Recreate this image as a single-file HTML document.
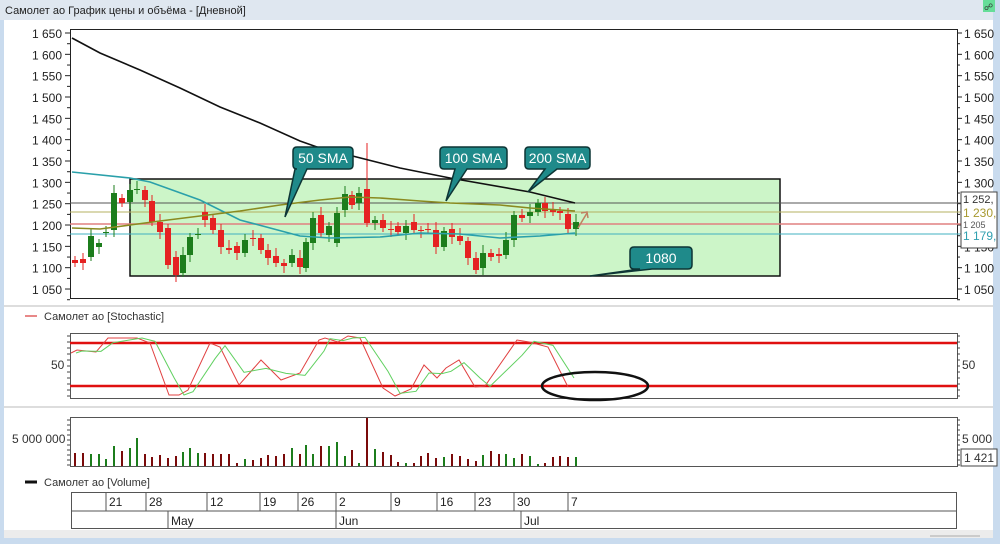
<!DOCTYPE html>
<html><head><meta charset="utf-8"><style>
html,body{margin:0;padding:0;width:1000px;height:544px;overflow:hidden;background:#c9dbee}
svg{display:block}
text{font-family:"Liberation Sans","DejaVu Sans",sans-serif}
</style></head><body>
<svg id="s" width="1000" height="544" xmlns="http://www.w3.org/2000/svg">
<rect width="1000" height="544" fill="#c9dbee"/>
<rect x="0" y="0" width="993" height="20" fill="#dfe7f0"/>
<text x="5" y="14" font-size="11" fill="#222">Самолет ао График цены и объёма - [Дневной]</text>
<rect x="962" y="2" width="31" height="17" fill="#dfe7f0"/>
<rect x="983" y="0" width="12" height="12" fill="#66dd99"/>
<text x="984" y="10" font-size="9" fill="#333">&#x260D;</text>
<rect x="4" y="20" width="989" height="512" fill="#fff"/>
<rect x="4" y="530" width="989" height="8" fill="#ececec"/>
<line x1="930" y1="536" x2="980" y2="536" stroke="#aaa" stroke-width="1"/>
<line x1="4" y1="306" x2="993" y2="306" stroke="#bbb"/>
<line x1="4" y1="407" x2="993" y2="407" stroke="#bbb"/>
<g id="g"></g>
</svg>
<script>
const g=document.getElementById('g');let h='';
const Y=p=>33+(1650-p)*0.4267;
h+='<rect x="70.5" y="29.5" width="887" height="269" fill="none" stroke="#222"/>';
h+='<rect x="130" y="179" width="650" height="97" fill="#ccf5c8" stroke="#111" stroke-width="1.5"/>';
for(let p=1650;p>=1050;p-=50){const y=Y(p);const t=(p/1000|0)+' '+String(p%1000).padStart(3,'0');
h+=`<line x1="65" y1="${y}" x2="70" y2="${y}" stroke="#222"/><text x="62" y="${y+5}" font-size="12" text-anchor="end" fill="#222">${t}</text>`;
h+=`<line x1="957" y1="${y}" x2="962" y2="${y}" stroke="#222"/><text x="964" y="${y+5}" font-size="12" fill="#222">${t}</text>`;
h+=`<line x1="67" y1="${y+10.7}" x2="70" y2="${y+10.7}" stroke="#222"/><line x1="957" y1="${y+10.7}" x2="960" y2="${y+10.7}" stroke="#222"/>`;}
h+='<line x1="70" y1="203" x2="993" y2="203" stroke="#555"/><line x1="70" y1="212" x2="993" y2="212" stroke="#b5b060"/><line x1="70" y1="224" x2="993" y2="224" stroke="#e08080" stroke-width="1.5"/><line x1="70" y1="234" x2="993" y2="234" stroke="#40b0c0"/>';
h+='<rect x="961" y="192" width="36" height="56" fill="#fff" stroke="#444"/><text x="963" y="203" font-size="11" fill="#333">1 252,</text><text x="963" y="217" font-size="12" fill="#a89a30">1 230,</text><text x="963" y="228" font-size="9" fill="#555">1 205</text><text x="963" y="240" font-size="12" fill="#30a0b0">1 179,</text>';
const C=[[75,260,263],[83,259,263],[91,257,236],[99,247,243],[106,233,232],[114,230,193],[122,198,203],[130,202,190],[137,190,189],[145,190,200],[152,201,222],[160,222,232],[168,228,265],[176,257,275],[183,273,255],[190,255,237],[198,235,234],[205,212,220],[213,218,230],[221,230,247],[229,248,250],[237,246,253],[245,253,240],[253,238,239],[261,238,250],[268,250,258],[276,256,263],[284,263,266],[292,263,255],[300,258,267],[306,268,242],[313,243,218],[321,215,233],[329,235,226],[337,243,213],[345,210,194],[352,195,205],[359,203,193],[367,189,223],[375,223,220],[383,220,228],[391,229,230],[398,226,232],[406,233,226],[414,222,230],[421,230,231],[428,229,230],[436,230,247],[444,247,231],[452,229,237],[460,236,241],[468,241,258],[476,258,270],[483,268,253],[491,253,257],[499,254,256],[506,255,240],[514,240,215],[522,215,218],[530,216,212],[538,212,203],[545,203,211],[553,210,212],[560,211,213],[568,214,229],[576,229,222]];
let vol=[13,13,12,12,7,20,15,18,28,12,9,11,8,10,14,18,13,13,12,12,12,3,7,6,8,11,10,12,18,12,21,12,20,20,24,10,16,3,4,17,14,11,4,3,3,10,13,8,9,12,10,7,5,11,15,12,12,8,12,10,2,3,9,10,9,9];
C.forEach((c,i)=>{const [x,o,cl]=c;const up=cl<o;const col=up?'#1c7d1c':'#e52222';const t=Math.min(o,cl),b=Math.max(o,cl);
const wt=i==38?143:t-4-(i%3)*2,wb=b+4+(i%2)*3;
h+=`<line x1="${x}" y1="${wt}" x2="${x}" y2="${wb}" stroke="${col}"/><rect x="${x-3}" y="${t}" width="6" height="${Math.max(1,b-t)}" fill="${col}"/>`;
const v=vol[i]||8;const vh=i==38?48:v;
h+=`<rect x="${x-1}" y="${466-vh}" width="2" height="${vh}" fill="${up?'#1c7d1c':'#7a0a0a'}"/>`;});
const pl=(pts,col,w)=>`<polyline points="${pts}" fill="none" stroke="${col}" stroke-width="${w}"/>`;
h+=pl('72,38 100,53 140,70 180,88 220,107 260,123 300,141 317,147 400,168 450,178 530,192 575,203','#111',1.6);
h+=pl('72,172 130,178 150,182 200,200 240,220 300,236 330,238 380,237 420,233 460,234 500,238 540,236 575,233','#2aa0aa',1.6);
h+=pl('72,228 100,229 130,225 160,221 200,216 240,211 280,205 320,200 350,197 380,198 420,201 450,203 500,205 530,208 575,211','#8a8a20',1.6);
h+='<line x1="578" y1="228" x2="587" y2="213" stroke="#c08060" stroke-width="1.5"/><polyline points="581,213 587,212 588,218" fill="none" stroke="#c08060" stroke-width="1.5"/>';
const co=(x,y,w,t,tx,ty,bx)=>`<path d="M${x+4},${y} H${x+w-4} Q${x+w},${y} ${x+w},${y+4} V${y+18} Q${x+w},${y+22} ${x+w-4},${y+22} H${bx+12} L${tx},${ty} L${bx},${y+22} H${x+4} Q${x},${y+22} ${x},${y+18} V${y+4} Q${x},${y} ${x+4},${y} Z" fill="#1f8a8a" stroke="#0d3535" stroke-width="1.5"/><text x="${x+w/2}" y="${y+16}" font-size="14" fill="#fff" text-anchor="middle">${t}</text>`;
h+=co(293,147,60,'50 SMA',285,217,295);
h+=co(440,147,67,'100 SMA',446,201,455);
h+=co(525,147,65,'200 SMA',528,192,545);
h+=co(630,247,62,'1080',590,276,640);
h+='<line x1="25" y1="316" x2="37" y2="316" stroke="#e06060" stroke-width="1.5"/><text x="44" y="320" font-size="11" fill="#333">Самолет ао [Stochastic]</text>';
h+='<rect x="70.5" y="333.5" width="887" height="65" fill="none" stroke="#555"/>';
for(let y=336;y<398;y+=6){h+=`<line x1="67" y1="${y}" x2="70" y2="${y}" stroke="#444"/><line x1="957" y1="${y}" x2="960" y2="${y}" stroke="#444"/>`;}
h+='<text x="51" y="369" font-size="12" fill="#333">50</text><text x="962" y="369" font-size="12" fill="#333">50</text>';
h+='<line x1="70" y1="343" x2="957" y2="343" stroke="#e01010" stroke-width="2.5"/><line x1="70" y1="386" x2="957" y2="386" stroke="#e01010" stroke-width="2.5"/>';
const R=[[71,353],[77,350],[96,352],[108,338],[137,338],[150,343],[169,395],[179,395],[188,390],[210,343],[220,347],[239,385],[261,360],[281,380],[300,373],[319,340],[325,338],[338,342],[348,336],[360,338],[383,388],[395,396],[411,389],[424,365],[437,378],[446,368],[459,360],[475,387],[485,386],[517,340],[529,342],[548,347],[568,387]];
h+=pl(R.map(p=>p.join(',')).join(' '),'#e04040',1);
const G=R.map((p,i)=>{const a=R[Math.max(0,i-1)];return [p[0]+5,(p[1]*2+a[1])/3];});
G[G.length-1]=[574,378];
h+=pl(G.map(p=>p.join(',')).join(' '),'#60d060',1);
h+='<ellipse cx="595" cy="386" rx="53" ry="14" fill="none" stroke="#111" stroke-width="2.5"/>';
h+='<rect x="70.5" y="417.5" width="887" height="49" fill="none" stroke="#555"/>';
for(let y=420;y<466;y+=5){h+=`<line x1="67" y1="${y}" x2="70" y2="${y}" stroke="#444"/><line x1="957" y1="${y}" x2="960" y2="${y}" stroke="#444"/>`;}
h+='<text x="12" y="443" font-size="12" fill="#333">5 000 000</text><text x="962" y="443" font-size="12" fill="#333">5 000</text>';
h+='<rect x="961" y="449" width="36" height="17" fill="#fff" stroke="#444"/><text x="964" y="462" font-size="12" fill="#333">1 421</text>';
h+='<line x1="25" y1="482" x2="37" y2="482" stroke="#111" stroke-width="3"/><text x="44" y="486" font-size="11" fill="#333">Самолет ао [Volume]</text>';
h+='<rect x="71.5" y="492.5" width="885" height="36" fill="none" stroke="#555"/><line x1="71" y1="511" x2="957" y2="511" stroke="#555"/>';
[[106,'21'],[146,'28'],[207,'12'],[260,'19'],[298,'26'],[336,'2'],[391,'9'],[437,'16'],[475,'23'],[514,'30'],[568,'7']].forEach(([x,t])=>{h+=`<line x1="${x}" y1="492" x2="${x}" y2="511" stroke="#555"/><text x="${x+3}" y="506" font-size="12" fill="#222">${t}</text>`;});
[[168,'May'],[336,'Jun'],[521,'Jul']].forEach(([x,t])=>{h+=`<line x1="${x}" y1="511" x2="${x}" y2="529" stroke="#555"/><text x="${x+3}" y="525" font-size="12" fill="#222">${t}</text>`;});
g.innerHTML=h;
</script>
</body></html>
